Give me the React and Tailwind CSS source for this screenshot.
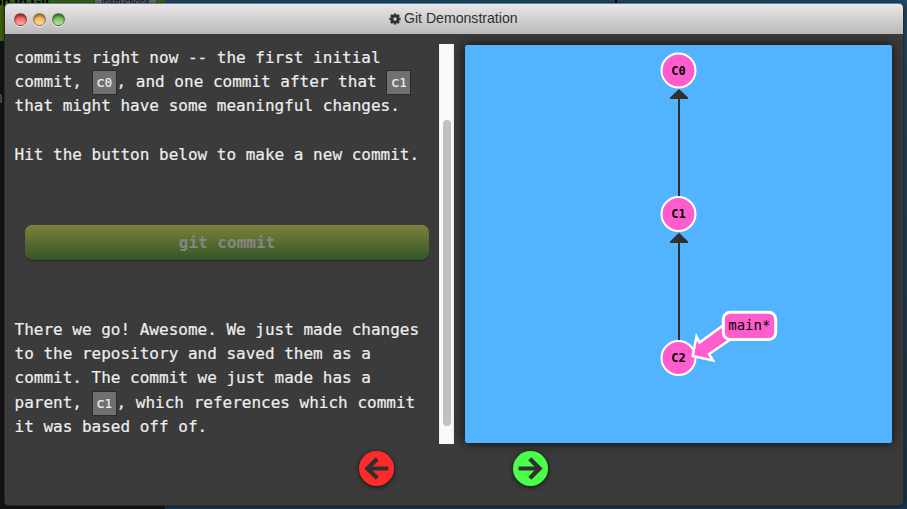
import React from "react";

const mono = "font-['DejaVu_Sans_Mono',monospace]";

function Code({ digit }) {
  return (
    <span className="inline-block h-[25px] w-[25px] border border-[#2b2b2b] bg-[#707070] text-center align-middle text-[14px] leading-[22px] -my-[3px]">
      c<span className="text-[12px]">{digit}</span>
    </span>
  );
}

function Line({ children }) {
  return <div className="h-[24.2px] whitespace-pre leading-[24.2px]">{children}</div>;
}

function Light({ color }) {
  return <span className={"h-[13px] w-[13px] rounded-full border border-black/40 shadow-[0_1px_1px_rgba(255,255,255,0.8),inset_0_2px_2px_rgba(0,0,0,0.35)] " + color} />;
}

function Nav({ flip, color }) {
  return (
    <div className={"flex h-[35px] w-[35px] items-center justify-center rounded-full shadow-[0_1px_5px_rgba(0,0,0,0.7)] " + color}>
      <svg width="35" height="35" viewBox="0 0 35 35" className={flip ? "-scale-x-100" : ""}>
        <path d="M18.200 7.800L8.500 17.500L18.200 27.200" fill="none" stroke="#303030" strokeWidth="4.400" />
        <rect x="8" y="15.400" width="21.500" height="4.200" rx="1" fill="#303030" />
      </svg>
    </div>
  );
}

function Commit({ y, id }) {
  return (
    <g>
      <circle cx="213.500" cy={y} r="17" fill="#ff5ccd" stroke="#fff" strokeWidth="2" />
      <text x="213.500" y={y + 4} textAnchor="middle" fontSize="12" fontWeight="bold">{id}</text>
    </g>
  );
}

function Tree() {
  return (
    <svg width="427" height="398" viewBox="0 0 427 398" className={mono}>
      <path d="M214 54V152M214 198V296" stroke="#303030" strokeWidth="2" />
      <path d="M214 44L223 52.500V54H205V52.500ZM214 187.800L223 196.500V198H205V196.500Z" fill="#303030" />
      <Commit y={25.500} id="C0" />
      <Commit y={169} id="C1" />
      <Commit y={313} id="C2" />
      <path d="M258 280.500L234.500 297.500L231.500 291.500L227.700 311L248 315.500L244 309L269 292Z" fill="#ff5ccd" stroke="#fff" strokeWidth="2.500" />
      <rect x="258.300" y="267.200" width="52.400" height="27.400" rx="7" fill="#ff5ccd" stroke="#fff" strokeWidth="3" />
      <text x="284.300" y="285" textAnchor="middle" fontSize="14">main*</text>
    </svg>
  );
}

export default function App() {
  return (
    <div className="relative h-[509px] w-[907px] overflow-hidden bg-[#204663]">
      <div className="absolute inset-0 flex bg-linear-to-b from-[#244e6e] to-[#1a3954]">
        <div className="h-full w-[165px] bg-[#151515] font-['Liberation_Sans',sans-serif]">
          <div className="relative h-[41px] bg-[#44690f] text-black">
            <span className="absolute left-[-6px] top-[-6px] whitespace-nowrap text-[13.5px] font-bold leading-[16px]">on to Git</span>
            <span className="absolute left-[94px] top-[-8px] h-[14px] w-[63px] border border-[#444] bg-[#777] text-center text-[9.500px] leading-[17px]">Instructions</span>
          </div>
          <div className="mt-[48px] text-[16px] leading-[18px] text-[#666] -ml-[6px]">n</div>
        </div>
        <div className="ml-[450px] h-1 w-[2px] bg-black" />
      </div>
      <div className="absolute left-1 top-[3px] flex h-[503px] w-[900px] flex-col overflow-hidden rounded-[5px] border border-[#2b2b2b] border-t-[#5b83a3] bg-[#3b3b3b] shadow-[0_0_7px_rgba(0,0,0,0.6)]">
        <header className="relative flex h-[30px] shrink-0 items-center bg-linear-to-b from-[#ebe7e8] to-[#b9b9b9]">
          <div className="flex gap-[6px] pl-[9px]">
            <Light color="bg-linear-to-b from-[#e83a3a] to-[#ffaaa8]" />
            <Light color="bg-linear-to-b from-[#e9a44c] to-[#ffdc91]" />
            <Light color="bg-linear-to-b from-[#57a844] to-[#b7e39c]" />
          </div>
          <div className="absolute left-[384px] flex items-center gap-[3px] font-['Liberation_Sans',sans-serif] text-[14.100px] text-[#303030]">
            <svg width="12" height="12" viewBox="0 0 12 12">
              <g stroke="#303030" strokeWidth="2.600"><path d="M6 .4V11.600M.4 6H11.600M2 2L10 10M10 2L2 10" /></g>
              <circle cx="6" cy="6" r="4" fill="#303030" /><circle cx="6" cy="6" r="1.700" fill="#d0d0d0" />
            </svg>
            <span>Git Demonstration</span>
          </div>
        </header>
        <main className="flex h-[410px] shrink-0 pt-[10px]">
          <div className={"h-[400px] w-[434px] shrink-0 pl-[9.500px] pt-[2px] text-[16px] text-[#eee] [-webkit-text-stroke:0.2px] " + mono}>
            <Line>commits right now -- the first initial</Line>
            <Line>commit, <Code digit="0" />, and one commit after that <Code digit="1" /></Line>
            <Line>that might have some meaningful changes.</Line>
            <Line> </Line>
            <Line>Hit the button below to make a new commit.</Line>
            <button className="ml-[10.500px] mt-[58px] mb-[58px] flex h-[35px] w-[404px] items-center justify-center rounded-[8px] bg-linear-to-b from-[#7e8039] to-[#315628] pt-px text-[#858585] font-bold [-webkit-text-stroke:0px] shadow-[0_1px_1px_#222,inset_0_1px_0_#858844]">git commit</button>
            <Line>There we go! Awesome. We just made changes</Line>
            <Line>to the repository and saved them as a</Line>
            <Line>commit. The commit we just made has a</Line>
            <Line>parent, <Code digit="1" />, which references which commit</Line>
            <Line>it was based off of.</Line>
          </div>
          <div className="h-[400px] w-[15px] shrink-0 border-x border-[#eee] bg-[#fafafa] pl-[3px] pt-[76px]">
            <div className="h-[306px] w-[8px] rounded-full bg-[#c1c1c1]" />
          </div>
          <div className="ml-[11px] mt-[1px] h-[398px] w-[427px] shrink-0 rounded-[2px] bg-[#52b3ff] shadow-[0_0_12px_rgba(0,0,0,0.8)]"><Tree /></div>
        </main>
        <footer className="flex gap-[119px] pl-[354px] pt-[7px]">
          <Nav color="bg-[#ff2b2b]" />
          <Nav flip color="bg-[#4aff4a]" />
        </footer>
      </div>
    </div>
  );
}
